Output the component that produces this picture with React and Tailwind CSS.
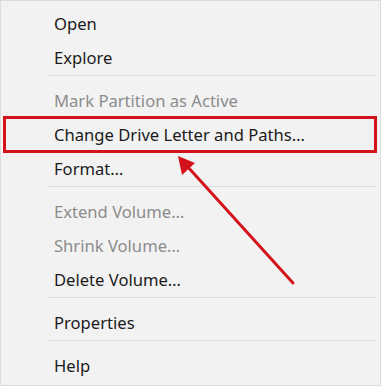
import React from 'react';

const menu = [
  { label: 'Open' },
  { label: 'Explore' },
  { sep: true },
  { label: 'Mark Partition as Active', disabled: true },
  { label: 'Change Drive Letter and Paths…', marked: true },
  { label: 'Format…' },
  { sep: true },
  { label: 'Extend Volume…', disabled: true },
  { label: 'Shrink Volume…', disabled: true },
  { label: 'Delete Volume…' },
  { sep: true },
  { label: 'Properties' },
  { sep: true },
  { label: 'Help' },
];

const MenuRow = ({ label, disabled, marked }) => (
  <div className={`relative h-[34px] flex items-center pl-[53px] text-[16.6px] ${disabled ? 'text-[#8c8c8c]' : 'text-[#1b1b1b]'}`}>
    <span>{label}</span>
    {marked && <span className="absolute left-[2px] right-[3px] -top-[2px] -bottom-[1px] border-[3px] border-[#d3121c]" />}
  </div>
);

const App = () => {
  return (
    <div className="relative w-[381px] h-[386px] overflow-hidden bg-[#f2f2f2] border border-[#dcdcdc] pt-[6px]" style={{ fontFamily: '"Noto Sans", "Open Sans", sans-serif' }}>
      {menu.map((item, i) =>
        item.sep
          ? <div key={i} className="h-px bg-[#dadada] ml-[47px] mr-[4px] mb-[8px]" />
          : <MenuRow key={i} {...item} />
      )}

      {/* red arrow pointing at the marked row */}
      <svg className="absolute inset-0 pointer-events-none" width="381" height="386" viewBox="0 0 381 386">
        <line x1="292" y1="282" x2="186" y2="165" stroke="#d3121c" strokeWidth="3" strokeLinecap="round" />
        <polygon points="177,155 194,162 181,174" fill="#d3121c" />
      </svg>
    </div>
  );
};

export default App;
